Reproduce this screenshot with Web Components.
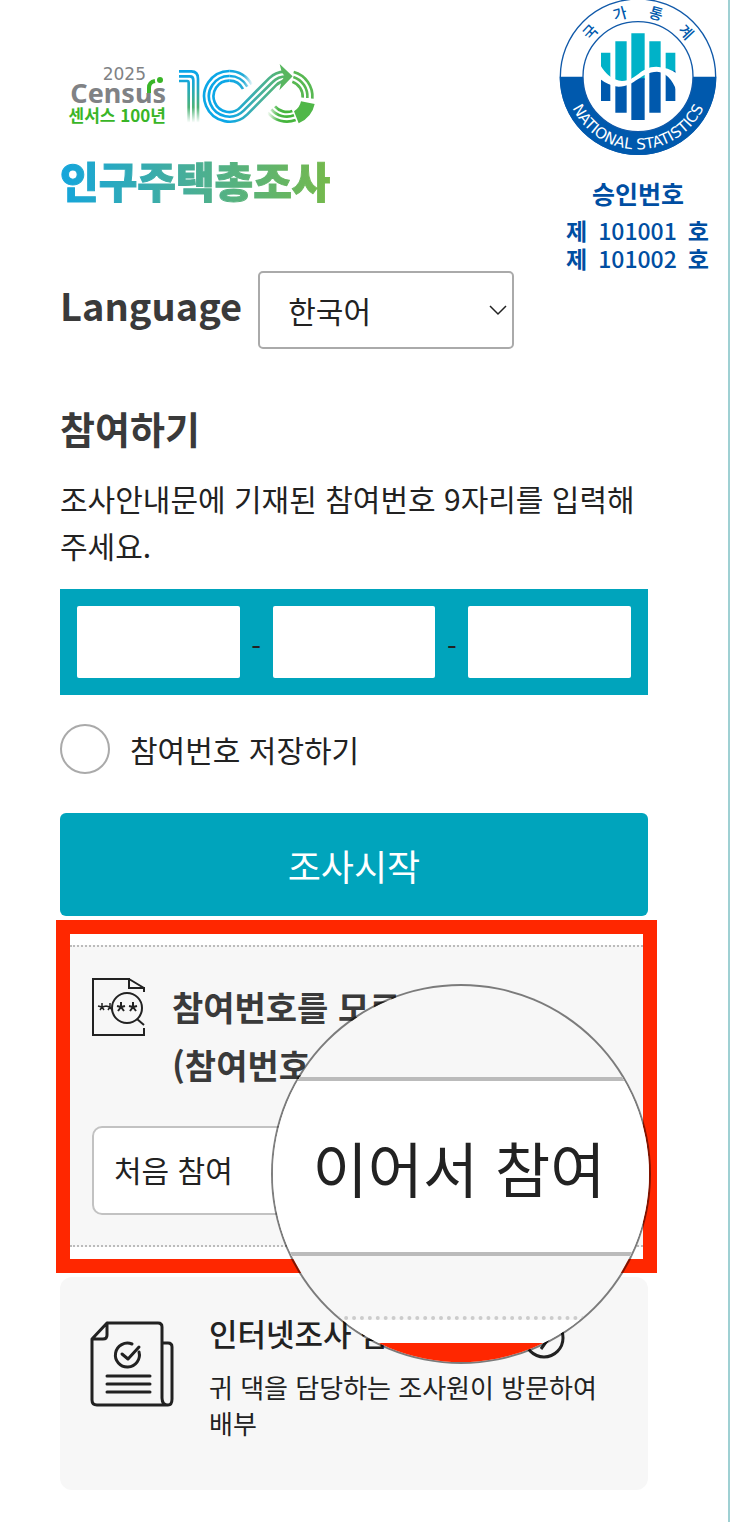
<!DOCTYPE html>
<html lang="ko">
<head>
<meta charset="utf-8">
<meta name="viewport" content="width=device-width, initial-scale=1">
<title>인구주택총조사</title>
<style>
  * {
    box-sizing: border-box;
  }

  body {
    margin: 0;
    background: #fff;
    color: #222;
    font-family: "Noto Sans CJK KR", sans-serif;
    font-size: 30px;
  }
</style>
</head>
<body>
<census-page>
  <census-header slot="header">
    <census-logo></census-logo>
    <language-select></language-select>
    <approval-seal slot="seal"></approval-seal>
  </census-header>
  <join-form></join-form>
  <forgot-panel>
    <zoom-lens slot="lens">이어서 참여</zoom-lens>
  </forgot-panel>
  <guide-card>
    <span slot="title">인터넷조사 참</span>
    귀 댁을 담당하는 조사원이 방문하여 배부
  </guide-card>
</census-page>

<script>
class BaseElement extends HTMLElement {
  constructor() {
    super();
    this.attachShadow({ mode: "open" });
  }

  connectedCallback() {
    this.shadowRoot.innerHTML = `
      <style>
        *, :host { box-sizing: border-box; }
        :host { display: block; }
        h1, h2, h3, p { margin: 0; }
        button, input, select { font: inherit; color: inherit; margin: 0; }
        svg { display: block; flex: none; }
      </style>
      ${this.template()}
    `;
  }
}

class CensusPage extends BaseElement {
  template() {
    return `
      <style>
        :host {
          min-height: 100vh;
          border-right: 2px solid #9fd0d3;
        }

        main {
          padding: 0 80px 32px 60px;
        }
      </style>
      <slot name="header"></slot>
      <main><slot></slot></main>
    `;
  }
}

class CensusHeader extends BaseElement {
  template() {
    return `
      <style>
        :host {
          display: flex;
          justify-content: space-between;
          align-items: flex-start;
          padding: 0 11px 0 60px;
        }

        .left {
          padding-top: 58px;
        }
      </style>
      <div class="left"><slot></slot></div>
      <slot name="seal"></slot>
    `;
  }
}

class CensusLogo extends BaseElement {
  template() {
    return `
      <style>
        .brand {
          display: flex;
          gap: 6px;
          padding-left: 10px;
        }

        .words {
          display: flex;
          flex-direction: column;
          align-items: flex-end;
          position: relative;
          width: 96px;
          padding-top: 8px;
          font-weight: 700;
          white-space: nowrap;
        }

        .year {
          padding-right: 20px;
          font: 17px/16px "DejaVu Sans", sans-serif;
          color: #808285;
        }

        .census {
          font: 700 27px/22px "Noto Sans", sans-serif;
          color: #808285;
        }

        .hundred {
          font-size: 17px;
          line-height: 22px;
          color: #39b527;
        }

        .sprout {
          position: absolute;
          right: 0;
          top: 16px;
        }

        h1 {
          width: max-content;
          margin-top: 20px;
          font-size: 42px;
          line-height: 60px;
          font-weight: 900;
          background: linear-gradient(90deg, #14a5dc, #45ae9c 45%, #75b94b);
          background-clip: text;
          -webkit-background-clip: text;
          color: transparent;
          -webkit-text-stroke: 1px transparent;
        }
      </style>
      <div class="brand">
        <div class="words">
          <span class="year">2025</span>
          <span class="census">Census</span>
          <span class="hundred">센서스 100년</span>
          <svg class="sprout" width="22" height="20" viewBox="0 0 22 20">
            <path d="M5 19V14Q5 8 11 7" fill="none" stroke="#fff" stroke-width="6"/>
            <path d="M5 19V14Q5 8 11 7" fill="none" stroke="#39b527" stroke-width="4"/>
            <circle cx="16" cy="6" r="3" fill="#39b527"/>
          </svg>
        </div>
        <svg width="150" height="72" viewBox="0 0 450 216" fill="none" stroke-width="8" role="img" aria-label="100">
          <defs>
            <linearGradient id="one" gradientUnits="userSpaceOnUse" x1="0" y1="40" x2="0" y2="194">
              <stop offset="0" stop-color="#0aa6e8"/>
              <stop offset=".15" stop-color="#12a6df"/>
              <stop offset=".7" stop-color="#4db378"/>
              <stop offset="1" stop-color="#4db378" stop-opacity="0"/>
            </linearGradient>
            <linearGradient id="loop" gradientUnits="userSpaceOnUse" x1="170" y1="0" x2="345" y2="0">
              <stop offset="0" stop-color="#0ca7e6"/>
              <stop offset=".5" stop-color="#46b1a4"/>
              <stop offset="1" stop-color="#58b65f"/>
            </linearGradient>
            <linearGradient id="ring" gradientUnits="userSpaceOnUse" x1="170" y1="0" x2="243" y2="0">
              <stop offset="0" stop-color="#0ca7e6"/>
              <stop offset=".6" stop-color="#24abd6"/>
              <stop offset="1" stop-color="#24abd6" stop-opacity="0"/>
            </linearGradient>
            <linearGradient id="tail" gradientUnits="userSpaceOnUse" x1="286" y1="0" x2="340" y2="0">
              <stop offset="0" stop-color="#4bb748" stop-opacity="0"/>
              <stop offset=".6" stop-color="#4bb748"/>
              <stop offset="1" stop-color="#45b53c"/>
            </linearGradient>
          </defs>
          <g stroke="url(#one)">
            <path d="M21 40H58Q78 40 78 62V194"/>
            <path d="M21 55H54Q64 55 64 67V194"/>
            <path d="M21 69H46Q50 69 50 75V194"/>
          </g>
          <g stroke="url(#ring)">
            <path d="M239 79A76 76 0 0 0 172 39"/>
            <path d="M226 86A61 61 0 0 0 172 54"/>
            <path d="M213 93A47 47 0 0 0 172 68"/>
          </g>
          <g stroke="url(#loop)">
            <path d="M172 39A76 76 0 1 0 226 169L312 82Q324 70 340 68"/>
            <path d="M172 54A61 61 0 1 0 215 158L302 72Q318 55 344 55"/>
            <path d="M172 68A47 47 0 1 0 205 148L291 61Q310 42 338 41"/>
          </g>
          <path d="M323 18L362 55L322 97L329 68L338 55L329 42Z" fill="#58b65f"/>
          <g stroke="#58b852">
            <path d="M365 42A76 76 0 0 1 421 122"/>
            <path d="M364 57A61 61 0 0 1 406 120"/>
            <path d="M361 71A47 47 0 0 1 392 119"/>
          </g>
          <path d="M387 130L428 138Q420 178 380 196L366 160Q383 150 387 130Z" fill="#50b748"/>
          <g stroke="url(#tail)">
            <path d="M371 186A76 76 0 0 1 287 164"/>
            <path d="M366 172A61 61 0 0 1 298 154"/>
            <path d="M361 159A47 47 0 0 1 309 145"/>
          </g>
        </svg>
      </div>
      <h1>인구주택총조사</h1>
    `;
  }
}

class ApprovalSeal extends BaseElement {
  template() {
    return `
      <style>
        :host {
          color: #004ea2;
          font-weight: 500;
        }

        .label {
          margin-top: 17px;
          font-size: 25px;
          line-height: 40px;
          font-weight: 700;
          text-align: center;
        }

        .number {
          display: flex;
          justify-content: flex-end;
          gap: 11px;
          padding-right: 8px;
          font-size: 23px;
          line-height: 28px;
        }

        .numbers {
          margin-top: 3px;
        }
      </style>
      <svg width="158" height="156" viewBox="56 0 474 468" role="img" aria-label="국가통계">
        <defs>
          <path id="arc" d="M75 200V230A218 218 0 0 0 511 230V200"/>
        </defs>
        <circle cx="293" cy="230" r="233" fill="#fff" stroke="#1059a9" stroke-width="4"/>
        <path d="M58 230A235 235 0 0 0 528 230Z" fill="#0059ad"/>
        <circle cx="293" cy="230" r="165" fill="#fff" stroke="#1059a9" stroke-width="4"/>
        <path d="M182 158h28v80h-28zM225 124h34v125h-34zM273 100h40v140h-40zM327 124h34v90h-34zM376 158h29v65h-29z" fill="#00b2c8"/>
        <path d="M182 235h28v68h-28zM225 250h34v88h-34zM273 235h40v125h-40zM327 210h34v128h-34zM376 212h29v91h-29z" fill="#0059ad"/>
        <path d="M178 192Q205 240 245 243C290 241 300 200 348 200Q385 202 410 221V275Q388 217 350 215C300 216 285 259 235 260Q205 257 178 236Z" fill="#fff"/>
        <g fill="#0059ad" font-family="Noto Sans CJK KR, sans-serif" font-size="45" font-weight="500" text-anchor="middle">
          <text transform="translate(293 230) rotate(-47)" y="-180">국</text>
          <text transform="translate(293 230) rotate(-16)" y="-180">가</text>
          <text transform="translate(293 230) rotate(16)" y="-180">통</text>
          <text transform="translate(293 230) rotate(47)" y="-180">계</text>
        </g>
        <text fill="#fff" font-family="DejaVu Sans, sans-serif" font-size="45" text-anchor="middle">
          <textPath href="#arc" startOffset="50%">NATIONAL STATISTICS</textPath>
        </text>
      </svg>
      <p class="label">승인번호</p>
      <div class="numbers">
        <div class="number"><b>제</b><span>101001</span><b>호</b></div>
        <div class="number"><b>제</b><span>101002</span><b>호</b></div>
      </div>
    `;
  }
}

class LanguageSelect extends BaseElement {
  template() {
    return `
      <style>
        :host {
          display: flex;
          gap: 16px;
          margin-top: 61px;
        }

        label {
          font-size: 38px;
          line-height: 68px;
          font-weight: 700;
          color: #3a3a3a;
        }

        .field {
          position: relative;
        }

        select {
          appearance: none;
          width: 256px;
          height: 78px;
          padding: 0 28px;
          border: 2px solid #aaa;
          border-radius: 5px;
          background: #fff;
        }

        svg {
          position: absolute;
          right: 7px;
          top: 34px;
          pointer-events: none;
        }
      </style>
      <label for="language">Language</label>
      <div class="field">
        <select id="language"><option>한국어</option></select>
        <svg width="18" height="12" viewBox="0 0 18 12" fill="none" stroke="#222" stroke-width="1.5">
          <path d="M1 1L9 9L17 1"/>
        </svg>
      </div>
    `;
  }
}

class JoinForm extends BaseElement {
  template() {
    return `
      <style>
        h2 {
          margin-top: 51px;
          font-size: 38px;
          line-height: 56px;
          color: #3a3a3a;
        }

        p {
          margin-top: 19px;
          line-height: 47px;
        }

        .code {
          display: grid;
          grid-template-columns: 1fr 33px 1fr 33px 1fr;
          align-items: center;
          margin-top: 20px;
          padding: 17px;
          background: #00a4bc;
          font-size: 28px;
          text-align: center;
        }

        .code span {
          padding-top: 8px;
        }

        .code input {
          width: 100%;
          height: 72px;
          padding: 0 12px;
          border: 0;
          border-radius: 2px;
          background: #fff;
        }

        .save {
          display: flex;
          align-items: center;
          gap: 20px;
          margin-top: 29px;
        }

        .save input {
          appearance: none;
          width: 50px;
          height: 50px;
          border: 2px solid #aaa;
          border-radius: 50%;
        }

        .start {
          width: 100%;
          height: 103px;
          margin-top: 39px;
          border: 0;
          border-radius: 6px;
          background: #00a4bc;
          color: #fff;
          font-size: 36px;
        }
      </style>
      <h2>참여하기</h2>
      <p>조사안내문에 기재된 참여번호 9자리를 입력해 주세요.</p>
      <div class="code">
        <input type="text" inputmode="numeric" maxlength="3" aria-label="참여번호 1">
        <span>-</span>
        <input type="text" inputmode="numeric" maxlength="3" aria-label="참여번호 2">
        <span>-</span>
        <input type="text" inputmode="numeric" maxlength="3" aria-label="참여번호 3">
      </div>
      <div class="save">
        <input type="checkbox" id="save">
        <label for="save">참여번호 저장하기</label>
      </div>
      <button type="button" class="start">조사시작</button>
    `;
  }
}

class ForgotPanel extends BaseElement {
  template() {
    return `
      <style>
        :host {
          position: relative;
          z-index: 1;
          margin: 4px -9px 0 -4px;
          padding: 11px 0 12px;
          border: 14px solid #ff2700;
          background: #fff;
        }

        .panel {
          padding: 31px 22px 30px;
          border: dotted #bbb;
          border-width: 2px 0;
          background: #f7f7f7;
        }

        .title {
          display: flex;
          gap: 27px;
        }

        h2 {
          font-size: 34px;
          line-height: 58px;
          color: #3a3a3a;
        }

        .choices {
          display: grid;
          grid-template-columns: 1fr 1fr;
          margin-top: 32px;
        }

        .choices button {
          height: 89px;
          padding: 0 20px 4px;
          border: 2px solid #c2c2c2;
          border-radius: 10px;
          background: #fff;
          text-align: left;
        }

        ::slotted(*) {
          position: absolute;
          right: -8px;
          top: 50px;
        }
      </style>
      <div class="panel">
        <div class="title">
          <svg width="53" height="58" viewBox="0 0 53 58" fill="none" stroke="#222" stroke-width="2">
            <path d="M52 14V10H37V1H1V57H52V50M37 1L52 10"/>
            <circle cx="35" cy="30" r="15"/>
            <path d="M45 41L52 47"/>
            <path d="M10 25v4M10 29l4-1M10 29l-4-1M10 29l2 3M10 29l-2 3M18 25v4M18 29l-4-1M18 29l2 3M18 29l-2 3" stroke-width="1.5"/>
            <path d="M29 24v5M29 29l4-1M29 29l-4-1M29 29l3 4M29 29l-3 4M41 24v5M41 29l4-1M41 29l-4-1M41 29l3 4M41 29l-3 4"/>
          </svg>
          <h2>참여번호를 모르<br>(참여번호</h2>
        </div>
        <div class="choices">
          <button type="button">처음 참여</button>
        </div>
      </div>
      <slot name="lens"></slot>
    `;
  }
}

class ZoomLens extends BaseElement {
  template() {
    return `
      <style>
        :host {
          width: 380px;
          height: 380px;
          padding-top: 91px;
          overflow: hidden;
          border: 2px solid rgba(0, 0, 0, 0.5);
          border-radius: 50%;
          background: #f7f7f7;
          background-clip: padding-box;
        }

        button {
          display: block;
          width: 100%;
          height: 179px;
          padding: 0 4px 0 0;
          border: solid #bbb;
          border-width: 4px 0;
          background: #fff;
          font-size: 60px;
        }

        .edge {
          height: 90px;
          margin-top: 60px;
          border-top: 4px dotted #ccc;
          background: linear-gradient(#fff 23px, #ff2700 23px) padding-box;
        }
      </style>
      <button type="button"><slot></slot></button>
      <div class="edge"></div>
    `;
  }
}

class GuideCard extends BaseElement {
  template() {
    return `
      <style>
        :host {
          display: flex;
          align-items: flex-start;
          gap: 35px;
          margin-top: 4px;
          padding: 34px 30px 49px;
          border-radius: 12px;
          background: #f7f7f7;
        }

        .icon {
          margin-top: 10px;
        }

        .text {
          flex: 1;
        }

        .title {
          display: flex;
          justify-content: space-between;
          align-items: flex-end;
          height: 48px;
          padding-right: 53px;
        }

        h3 {
          align-self: flex-start;
          font-size: 31px;
          line-height: 44px;
          font-weight: 500;
        }

        p {
          margin-top: 10px;
          font-size: 26px;
          line-height: 36px;
        }
      </style>
      <svg class="icon" width="84" height="86" viewBox="0 0 84 86" fill="none" stroke="#222" stroke-width="3" stroke-linecap="round" stroke-linejoin="round">
        <path d="M17 2H68Q72 2 72 6V77Q72 84 78 84Q82 84 82 78V26Q82 22 78 22H72M17 2L2 18V79Q2 84 7 84H78M17 2V14Q17 18 13 18H2"/>
        <path d="M42 23A12 12 0 1 0 49 31"/>
        <path d="M32 33L38 38L49 26"/>
        <path d="M17 55H60M17 63H60M17 71H60"/>
      </svg>
      <div class="text">
        <div class="title">
          <h3><slot name="title"></slot></h3>
          <svg width="42" height="42" viewBox="0 0 42 42" fill="none" stroke="#222" stroke-width="3">
            <circle cx="21" cy="21" r="19"/>
            <path d="M18 13L26 21L18 32"/>
          </svg>
        </div>
        <p><slot></slot></p>
      </div>
    `;
  }
}

customElements.define("census-page", CensusPage);
customElements.define("census-header", CensusHeader);
customElements.define("census-logo", CensusLogo);
customElements.define("approval-seal", ApprovalSeal);
customElements.define("language-select", LanguageSelect);
customElements.define("join-form", JoinForm);
customElements.define("forgot-panel", ForgotPanel);
customElements.define("zoom-lens", ZoomLens);
customElements.define("guide-card", GuideCard);
</script>
</body>
</html>
